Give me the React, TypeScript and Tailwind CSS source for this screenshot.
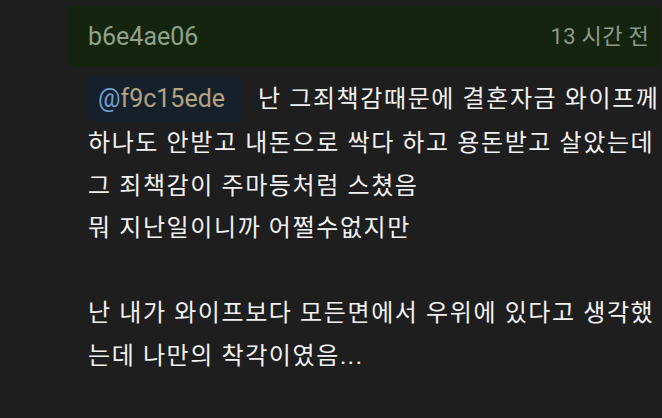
import React from "react";

const font = { fontFamily: '"Roboto", "Noto Sans CJK KR", sans-serif' };

export default function App() {
  return (
    <div
      className="w-[662px] h-[418px] overflow-hidden bg-[#1e1e1e] text-[#f1f1f1]"
      style={font}
    >
      {/* Header */}
      <div className="ml-[68px] mr-[2px] mt-[6px] h-[61px] bg-[#15240f] flex items-center justify-between pl-[20px] pr-[11px]">
        <span className="text-[25px] text-[#8fa38b]">b6e4ae06</span>
        <span className="text-[22px] text-[#8f9a8c] tracking-[0.3px]">13 시간 전</span>
      </div>

      {/* Comment body */}
      <div className="pl-[88px] pt-[9px] text-[24px] leading-[42.5px] tracking-[1.6px] whitespace-nowrap">
        <div className="flex items-center">
          <span className="inline-flex items-center h-[46px] pl-[10px] pr-[16px] rounded-[8px] bg-[#16202b] text-[25px] tracking-normal">
            <span className="text-[#6c9fd2]">@</span>
            <span className="text-[#b2a480]">f9c15ede</span>
          </span>
          <span className="ml-[17px]">난 그죄책감때문에 결혼자금 와이프께</span>
        </div>
        <div>하나도 안받고 내돈으로 싹다 하고 용돈받고 살았는데</div>
        <div>그 죄책감이 주마등처럼 스쳤음</div>
        <div>뭐 지난일이니까 어쩔수없지만</div>
        <div>&nbsp;</div>
        <div>난 내가 와이프보다 모든면에서 우위에 있다고 생각했</div>
        <div>는데 나만의 착각이였음...</div>
      </div>
    </div>
  );
}
